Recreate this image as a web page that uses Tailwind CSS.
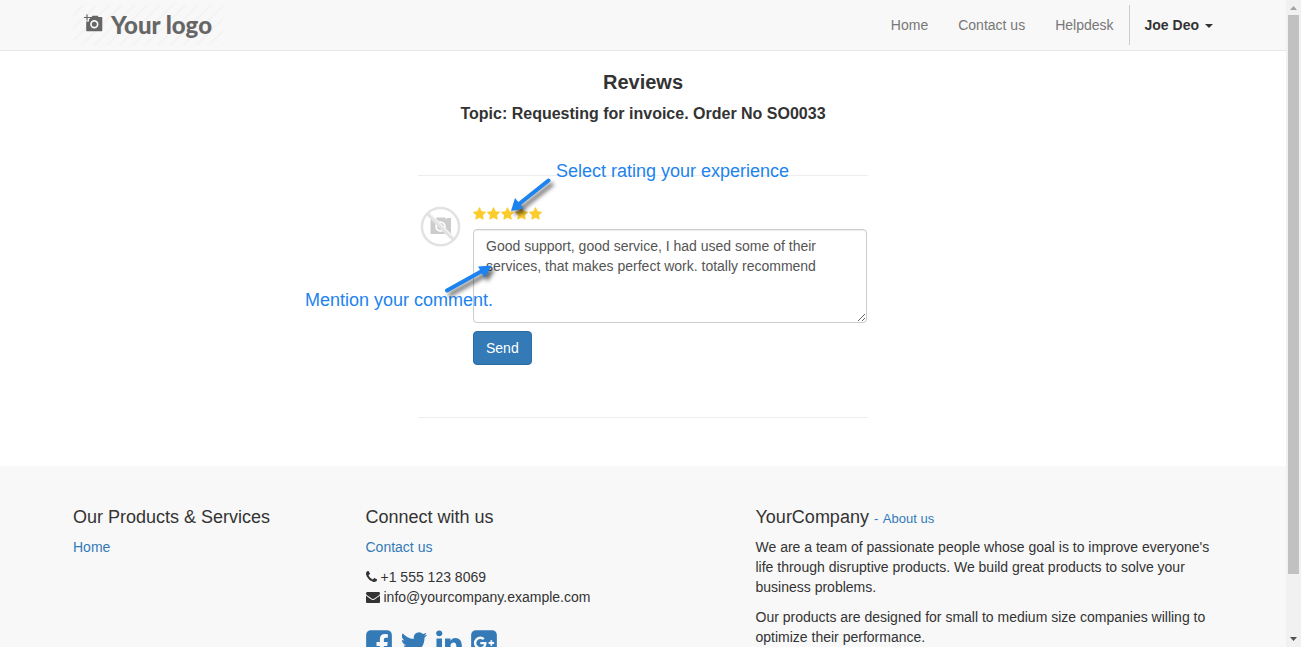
<!DOCTYPE html>
<html lang="en">
<head>
<meta charset="utf-8">
<meta name="viewport" content="width=device-width, initial-scale=1">
<title>Reviews</title>
<script src="https://cdn.jsdelivr.net/npm/@tailwindcss/browser@4"></script>
</head>
<body class="flex h-screen overflow-hidden bg-white font-['Liberation_Sans',Arial,sans-serif] text-sm leading-5 text-[#333333]">
<div class="flex min-w-0 flex-1 flex-col">
  <header class="shrink-0 border-b border-[#e7e7e7] bg-[#f8f8f8]">
    <div class="mx-auto flex h-[50px] max-w-[1170px] items-center justify-between px-[15px]">
      <a href="#" class="flex h-10 w-[150px] items-center gap-2 bg-[repeating-linear-gradient(135deg,#f8f8f8_0px,#f8f8f8_6px,#f3f3f3_7px,#f3f3f3_8px,#f8f8f8_9px)] pl-[11px] text-[#666666]">
        <svg class="mb-1 h-[18px] w-[19px]" viewBox="0 0 19 18" fill="currentColor" aria-hidden="true">
          <path fill-rule="evenodd" d="M6 3h1.500l1-1.300h5L14.700 3H17.500a.8.8 0 0 1 .8.8V16.500a.8.8 0 0 1-.8.8H3a.8.8 0 0 1-.8-.8V7.500H5V5h1zM10.300 6a4.200 4.200 0 1 0 0 8.400a4.200 4.200 0 0 0 0-8.400zM10.300 7.700a2.500 2.500 0 1 1 0 5a2.500 2.500 0 0 1 0-5z"/>
          <path d="M2.400.5h1.200v2.400H6v1.200H3.600v2.400H2.400V4.100H0V2.900h2.400z"/>
        </svg>
        <span class="font-['Lato',sans-serif] text-2xl leading-8 font-black">Your logo</span>
      </a>
      <nav class="flex items-center">
        <a href="#" class="px-[15px] text-[#777777]">Home</a>
        <a href="#" class="px-[15px] text-[#777777]">Contact us</a>
        <a href="#" class="px-[15px] text-[#777777]">Helpdesk</a>
        <button type="button" class="flex h-10 items-center gap-1.5 border-l border-[#cccccc] pl-[15px] font-bold">Joe Deo
          <svg class="mt-0.5 h-1 w-2" viewBox="0 0 8 4" fill="currentColor" aria-hidden="true"><path d="M0 0h8L4 4z"/></svg>
        </button>
      </nav>
    </div>
  </header>

  <main class="relative h-[415px] shrink-0">
    <h1 class="pt-5 text-center text-xl leading-[22px] font-bold">Reviews</h1>
    <h2 class="pt-[11px] text-center text-base leading-5 font-bold">Topic: Requesting for invoice. Order No SO0033</h2>
    <section class="relative mx-auto mt-[51px] w-[450px] border-y border-[#eeeeee] pt-[30px] pb-[52px]">
      <form class="flex items-start gap-3 pl-0.5">
        <svg class="h-[42px] w-[41px] shrink-0" viewBox="0 0 41 42" fill="none" aria-hidden="true">
          <path fill="#cccccc" fill-rule="evenodd" d="M10.500 13.500h4.500l2-2h8l2 2v-1.500h4V28H10.500zM20.500 15.200a5.300 5.300 0 1 0 0 10.600a5.300 5.300 0 0 0 0-10.600zM20.500 17a3.500 3.500 0 1 1 0 7a3.500 3.500 0 0 1 0-7z"/>
          <path d="M8.500 8l25.500 25.500" stroke="#f4f4f4" stroke-width="4"/>
          <path d="M7.500 8l26 26" stroke="#e2e2e2" stroke-width="2.500"/>
          <circle cx="20.500" cy="20.700" r="18.600" stroke="#e2e2e2" stroke-width="2.500"/>
        </svg>
        <div class="min-w-0 flex-1 pr-px">
          <svg class="absolute h-0 w-0" aria-hidden="true"><symbol id="star" viewBox="64 0 1664 1792"><path d="M1728 647q0 22-26 48l-363 354 86 500q1 7 1 20 0 21-10.500 35.500t-30.500 14.500q-19 0-40-12l-449-236-449 236q-22 12-40 12-21 0-31.500-14.500t-10.500-35.500q0-6 2-20l86-500-364-354q-25-27-25-48 0-37 56-46l502-73 225-455q19-41 49-41t49 41l225 455 502 73q56 9 56 46z"/></symbol></svg>
          <div class="flex h-[23px] gap-px pt-px text-[#fccb2c]" role="img" aria-label="5 out of 5 stars">
            <svg class="h-3.5 w-[13px]" fill="currentColor"><use href="#star"/></svg>
            <svg class="h-3.5 w-[13px]" fill="currentColor"><use href="#star"/></svg>
            <svg class="h-3.5 w-[13px]" fill="currentColor"><use href="#star"/></svg>
            <svg class="h-3.5 w-[13px]" fill="currentColor"><use href="#star"/></svg>
            <svg class="h-3.5 w-[13px]" fill="currentColor"><use href="#star"/></svg>
          </div>
          <textarea aria-label="Comment" class="block h-[94px] w-full resize-y rounded border border-[#cccccc] bg-white px-3 py-1.5 text-sm leading-5 text-[#555555] shadow-[inset_0_1px_1px_rgba(0,0,0,0.075)]">Good support, good service, I had used some of their services, that makes perfect work. totally recommend</textarea>
          <button type="submit" class="mt-2 block rounded border border-[#2e6da4] bg-[#337ab7] px-3 py-1.5 text-white">Send</button>
        </div>
      </form>

      <!-- Help callouts over the form -->
      <p class="absolute -top-[17px] left-[138px] text-lg leading-6 whitespace-nowrap text-[#1d83ee]">Select rating your experience</p>
      <p class="absolute top-28 -left-[113px] text-lg leading-6 whitespace-nowrap text-[#1d83ee]">Mention your comment.</p>
      <svg class="absolute top-0 left-[90px] h-12 w-[52px] overflow-visible drop-shadow-[3px_4px_2px_rgba(0,0,0,0.6)]" viewBox="0 0 52 48" aria-hidden="true">
        <path d="M40.500 4.500L11 28" fill="none" stroke="#1d83ee" stroke-width="4" stroke-linecap="round"/><path d="M3 35l4-13 8.500 10.500z" fill="#1d83ee"/>
      </svg>
      <svg class="absolute top-[84px] left-[24px] h-9 w-[52px] overflow-visible drop-shadow-[3px_4px_2px_rgba(0,0,0,0.6)]" viewBox="0 0 52 36" aria-hidden="true">
        <path d="M5 30.500L40 11" fill="none" stroke="#1d83ee" stroke-width="4" stroke-linecap="round"/><path d="M50 5.500l-14 1 6.500 11z" fill="#1d83ee"/>
      </svg>
    </section>
  </main>

  <footer class="flex-1 overflow-hidden bg-[#f8f8f8]">
    <div class="mx-auto grid max-w-[1170px] grid-cols-12 pt-[41px]">
      <section class="col-span-3 px-[15px]">
        <h3 class="mb-2.5 h-5 text-lg leading-5">Our Products &amp; Services</h3>
        <a href="#" class="text-[#337ab7]">Home</a>
      </section>
      <section class="col-span-4 px-[15px]">
        <h3 class="mb-2.5 h-5 text-lg leading-5">Connect with us</h3>
        <a href="#" class="text-[#337ab7]">Contact us</a>
        <p class="mt-2.5 flex items-center gap-1">
          <svg class="h-3.5 w-[11px]" viewBox="192 0 1408 1792" fill="currentColor" aria-hidden="true"><path d="M1600 1240q0 27-10 70.500t-21 68.500q-21 50-122 106-94 51-186 51-27 0-53-3.500t-57.500-12.500-47-14.500-55.500-20.500-49-18q-98-35-175-83-127-79-264-216t-216-264q-48-77-83-175-3-9-18-49t-20.500-55.500-14.500-47-12.500-57.500-3.500-53q0-92 51-186 56-101 106-122 25-11 68.500-21t70.500-10q14 0 21 3 18 6 53 76 11 19 30 54t35 63.500 31 53.500q3 4 17.500 25t21.500 35.500 7 28.500q0 20-28.500 50t-62 55-62 53-28.500 46q0 9 5 22.500t8.500 20.500 14 24 11.500 19q76 137 174 235t235 174q2 1 19 11.500t24 14 20.500 8.500 22.500 5q18 0 46-28.500t53-62 55-62 50-28.500q14 0 28.500 7t35.500 21.500 25 17.500q25 15 53.500 31t63.500 35 54 30q70 35 76 53 3 7 3 21z"/></svg>
          <span>+1 555 123 8069</span>
        </p>
        <p class="flex items-center gap-1">
          <svg class="size-3.5" viewBox="0 0 1792 1792" fill="currentColor" aria-hidden="true"><path d="M1792 710v794q0 66-47 113t-113 47h-1472q-66 0-113-47t-47-113v-794q44 49 101 87 362 246 497 345 57 42 92.500 65.500t94.500 48 110 24.500h2q51 0 110-24.500t94.500-48 92.500-65.500q170-123 498-345 57-39 100-87zm0-294q0 79-49 151t-122 123q-376 261-468 325-10 7-42.500 31t-54 38.500-52 32.500-57.500 27-50 9h-2q-23 0-50-9t-57.500-27-52-32.500-54-38.500-42.500-31q-91-64-262-182.500t-205-142.500q-62-42-117-115.500t-55-136.500q0-78 41.500-130t118.500-52h1472q65 0 112.500 47t47.500 113z"/></svg>
          <span>info@yourcompany.example.com</span>
        </p>
        <div class="mt-[21px] flex gap-[9px] text-[#337ab7]">
          <a href="#" aria-label="Facebook"><svg class="h-[30px] w-[26px]" viewBox="128 0 1536 1792" fill="currentColor"><path d="M1376 128q119 0 203.500 84.500t84.500 203.500v960q0 119-84.500 203.500t-203.500 84.500h-188v-595h199l30-232h-229v-148q0-56 23.500-84t91.500-28l122-1v-207q-63-9-178-9-136 0-217.500 80t-81.500 226v171h-200v232h200v595h-532q-119 0-203.500-84.500t-84.500-203.500v-960q0-119 84.500-203.500t203.500-84.500h960z"/></svg></a>
          <a href="#" aria-label="Twitter"><svg class="h-[30px] w-[26px] overflow-visible" viewBox="128 0 1536 1792" fill="currentColor"><path d="M1684 408q-67 98-162 167 1 14 1 42 0 130-38 259.500t-115.500 248.500-184.500 210.500-258 146-323 54.500q-271 0-496-145 35 4 78 4 225 0 401-138-105-2-188-64.500t-114-159.500q33 5 61 5 43 0 85-11-112-23-185.500-111.500t-73.500-205.500v-4q68 38 146 41-66-44-105-115t-39-154q0-88 44-163 121 149 294.500 238.500t371.500 99.500q-8-38-8-74 0-134 94.500-228.500t228.500-94.500q140 0 236 102 109-21 205-78-37 115-142 178 93-10 186-50z"/></svg></a>
          <a href="#" aria-label="LinkedIn"><svg class="h-[30px] w-[26px]" viewBox="128 0 1536 1792" fill="currentColor"><path d="M477 625v991h-330v-991h330zm21-306q1 73-50.500 122t-135.500 49h-2q-82 0-132-49t-50-122q0-74 51.500-122.500t134.500-48.500 133 48.500 51 122.500zm1166 729v568h-329v-530q0-105-40.500-164.500t-126.500-59.500q-63 0-105.500 34.500t-63.500 85.500q-11 30-11 81v553h-329q2-399 2-647t-1-296l-1-48h329v144h-2q20-32 41-56t56.500-52 87-43.500 114.500-15.500q171 0 275 113.500t104 332.500z"/></svg></a>
          <a href="#" aria-label="Google Plus"><svg class="h-[30px] w-[26px]" viewBox="128 0 1536 1792" fill="currentColor"><path d="M1045 905q0-26-6-64h-362v132h217q-3 24-16.500 50t-37.500 53-66.500 44.500-96.500 17.500q-99 0-169-71t-70-171 70-171 169-71q92 0 153 59l104-101q-108-100-257-100-160 0-272 112.500t-112 271.500 112 271.500 272 112.500q165 0 266.500-105t101.500-270zm345 46h109v-110h-109v-110h-110v110h-110v110h110v110h110v-110zm274-535v960q0 119-84.500 203.500t-203.500 84.500h-960q-119 0-203.500-84.500t-84.500-203.500v-960q0-119 84.500-203.500t203.500-84.500h960q119 0 203.500 84.500t84.500 203.500z"/></svg></a>
        </div>
      </section>
      <section class="col-span-5 px-[15px]">
        <h3 class="mb-2.5 h-5 text-lg leading-5">YourCompany <small class="text-[13px] leading-none text-[#337ab7]">- <a href="#" class="ml-px">About us</a></small></h3>
        <p class="mb-2.5">We are a team of passionate people whose goal is to improve everyone's life through disruptive products. We build great products to solve your business problems.</p>
        <p>Our products are designed for small to medium size companies willing to optimize their performance.</p>
      </section>
    </div>
  </footer>
</div>

<!-- Page scrollbar -->
<div class="flex w-[15px] shrink-0 flex-col items-center bg-[#f1f1f1]" aria-hidden="true">
  <svg class="h-[15px] w-[15px] shrink-0" viewBox="0 0 15 15" fill="#a3a3a3"><path d="M4 10h7L7.500 6z"/></svg>
  <div class="w-[11px] flex-[559] bg-[#c1c1c1]"></div>
  <div class="flex-[58]"></div>
  <svg class="h-[15px] w-[15px] shrink-0" viewBox="0 0 15 15" fill="#505050"><path d="M4 5h7L7.500 9z"/></svg>
</div>
</body>
</html>
